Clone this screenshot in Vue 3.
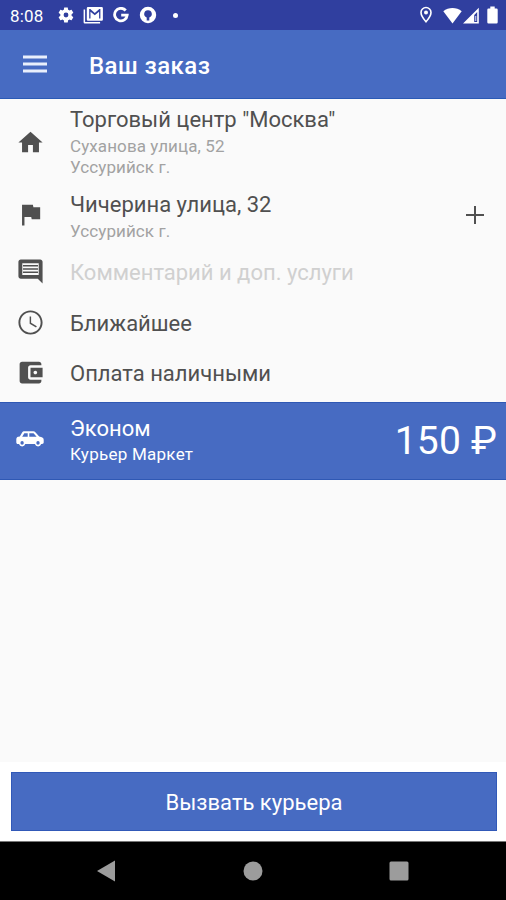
<script setup>
import { ref } from 'vue'

const time = ref('8:08')

const rows = [
    {
        id: 'from',
        title: 'Торговый центр "Москва"',
        lines: ['Суханова улица, 52', 'Уссурийск г.'],
        icon: 'M10 20v-6h4v6h5v-8h3L12 3 2 12h3v8z'
    },
    {
        id: 'to',
        title: 'Чичерина улица, 32',
        lines: ['Уссурийск г.'],
        icon: 'M14.4 6L14 4H5v17h2v-7h5.6l.4 2h7V6z',
        canAdd: true
    },
    {
        id: 'comment',
        title: 'Комментарий и доп. услуги',
        placeholder: true,
        icon: 'M21.99 4c0-1.1-.89-2-1.99-2H4c-1.1 0-2 .9-2 2v12c0 1.1.9 2 2 2h14l4 4-.01-18zM18.8 14.8H5.2V5.2h13.6zM5.8 6.6h12.4v1.2H5.8zM5.8 9.3h12.4v1.2H5.8zM5.8 12h12.4v1.2H5.8z'
    },
    {
        id: 'time',
        title: 'Ближайшее',
        icon: 'M11.99 2C6.47 2 2 6.48 2 12s4.47 10 9.99 10C17.52 22 22 17.52 22 12S17.52 2 11.99 2zM12 20.4c-4.64 0-8.4-3.76-8.4-8.4s3.76-8.4 8.4-8.4 8.4 3.76 8.4 8.4-3.76 8.4-8.4 8.4zM12.5 7H11.3v6l5.25 3.15.7-1.1-4.75-2.8z'
    },
    {
        id: 'payment',
        title: 'Оплата наличными',
        icon: 'M21 18v1c0 1.1-.9 2-2 2H5c-1.11 0-2-.9-2-2V5c0-1.1.89-2 2-2h14c1.1 0 2 .9 2 2v1h-9c-1.11 0-2 .9-2 2v8c0 1.1.89 2 2 2h9zm-9-2h10V8H12v8zm4-2.5c-.83 0-1.5-.67-1.5-1.5s.67-1.5 1.5-1.5 1.5.67 1.5 1.5-.67 1.5-1.5 1.5z'
    }
]

const tariff = {
    name: 'Эконом',
    service: 'Курьер Маркет',
    price: '150 ₽'
}
</script>

<template>
    <div class="screen">
        <div class="status-bar">
            <span class="clock">{{ time }}</span>
            <div class="notifications">
                <svg width="18" height="18" viewBox="0 0 24 24">
                    <path fill-rule="evenodd" d="M19.4 13c0-.3.1-.6.1-1s0-.7-.1-1l2.100-1.600c.2-.2.3-.4.1-.7l-2-3.400c-.1-.3-.4-.3-.6-.3l-2.500 1c-.5-.4-1.100-.7-1.700-1l-.4-2.600c0-.3-.2-.4-.4-.4h-4c-.3 0-.5.1-.5.4l-.4 2.600c-.6.3-1.200.6-1.700 1l-2.500-1c-.2-.1-.5 0-.6.3l-2 3.400c-.1.3 0 .5.1.7L4.500 11c0 .3-.1.7-.1 1s0 .7.1 1l-2.100 1.600c-.2.2-.3.5-.1.7l2 3.400c.1.3.4.3.6.3l2.500-1c.5.4 1.100.7 1.700 1l.4 2.600c0 .3.2.4.5.4h4c.2 0 .4-.1.4-.4l.4-2.600c.6-.3 1.200-.6 1.700-1l2.500 1c.2.1.5 0 .6-.3l2-3.400c.1-.2 0-.5-.1-.7zM12 15.200a3.200 3.200 0 1 1 0-6.400 3.200 3.200 0 0 1 0 6.400z" />
                </svg>
                <svg class="mail" width="20" height="18" viewBox="0 0 20 18">
                    <path fill-rule="evenodd" d="M5 1h13.700A1.200 1.200 0 0 1 19.900 2.200v11.300a1.200 1.200 0 0 1-1.200 1.200H5a1.200 1.200 0 0 1-1.200-1.200V2.200A1.200 1.200 0 0 1 5 1zM6.200 3v9.500h1.300V5.800l4.300 3.500 4.300-3.500v6.700h1.300V3h-1.100l-4.500 3.900L7.300 3z" />
                    <path d="M.6 3.500h1.500v12.500h15v1.500H1.800A1.200 1.200 0 0 1 .6 16.300z" />
                </svg>
                <svg class="google" width="16" height="16" viewBox="0 0 16 16">
                    <path class="stroke" d="M12.700 3.500A6.300 6.300 0 1 0 14.200 8.200H8.200" />
                </svg>
                <svg class="badge" width="18" height="18" viewBox="0 0 18 18">
                    <path fill-rule="evenodd" d="M9 .8a8.200 8.200 0 1 1 0 16.400A8.200 8.200 0 0 1 9 .8zM9 4.300a3.700 3.700 0 0 0-1.300 7.200v3h2.600v-3A3.700 3.700 0 0 0 9 4.300z" />
                </svg>
                <i class="dot"></i>
            </div>
            <div class="indicators">
                <svg class="pin" width="14" height="18" viewBox="0 0 14 18">
                    <path class="outline" d="M7 1.500a5 5 0 0 0-5 5c0 3.500 5 9.300 5 9.300s5-5.800 5-9.300a5 5 0 0 0-5-5z" />
                    <circle cx="7" cy="6.500" r="2" />
                </svg>
                <svg class="wifi" width="19" height="17" viewBox="0 0 19 17">
                    <path d="M9.500 16.500L.3 4.200C5.500-.2 13.500-.2 18.700 4.200z" />
                </svg>
                <svg class="signal" width="16" height="17" viewBox="0 0 16 17">
                    <path fill-rule="evenodd" d="M15.800.7v15.800H0zM14.200 5l-3 3v6.900h3z" />
                    <path d="M12.400 9h.8v5h-.8z" />
                </svg>
                <svg class="battery" width="11" height="18" viewBox="0 0 11 18">
                    <path d="M3.300.6h4.400v2H9.500q1.200 0 1.200 1.200v12.400q0 1.200-1.200 1.200h-8Q.3 17.400.3 16.200V3.800Q.3 2.600 1.500 2.600h1.800z" />
                </svg>
            </div>
        </div>

        <div class="app-bar">
            <svg class="menu" width="24" height="18" viewBox="0 0 24 18">
                <path d="M0 .5h24v3H0zM0 7.500h24v3H0zM0 14.500h24v3H0z" />
            </svg>
            <h1>Ваш заказ</h1>
        </div>

        <div class="order">
            <div v-for="row in rows" :key="row.id" :class="['row', `row-${row.id}`]">
                <svg class="row-icon" viewBox="0 0 24 24">
                    <path fill-rule="evenodd" :d="row.icon" />
                </svg>
                <div class="row-text">
                    <div :class="['title', { 'placeholder': row.placeholder }]">{{ row.title }}</div>
                    <div v-if="row.lines" class="lines">
                        <div v-for="line in row.lines" :key="line">{{ line }}</div>
                    </div>
                </div>
                <svg v-if="row.canAdd" class="add" width="18" height="18" viewBox="0 0 18 18">
                    <path d="M8 0h2v8h8v2h-8v8H8v-8H0V8h8z" />
                </svg>
            </div>
        </div>

        <div class="tariff">
            <svg class="car" width="28" height="17" viewBox="0 0 28 16" preserveAspectRatio="none">
                <path fill-rule="evenodd" d="M8.500.3h8.700c1 0 1.700.3 2.400 1l3.600 3.900 2.600.7c1.300.4 1.900 1.200 1.900 2.500v2.300c0 1-.6 1.500-1.700 1.500h-.8a3.300 3.300 0 0 1-6.300 0H9.300a3.300 3.300 0 0 1-6.300 0H2C.9 12.200.3 11.600.3 10.500V8c0-1.300.6-2.200 1.900-2.500l1.600-.3L6 1.600C6.600.7 7.300.3 8.500.3zM8.300 2L6.200 5.300h5.500V2zM13.300 2v3.300h7.300L18 2.500c-.3-.4-.6-.5-1.200-.5zM6.100 9.500a1.700 1.700 0 1 0 0 3.400 1.700 1.700 0 0 0 0-3.400zM22 9.500a1.700 1.700 0 1 0 0 3.400 1.700 1.700 0 0 0 0-3.400z" />
            </svg>
            <div class="tariff-text">
                <div class="tariff-name">{{ tariff.name }}</div>
                <div class="tariff-service">{{ tariff.service }}</div>
            </div>
            <div class="price">{{ tariff.price }}</div>
        </div>

        <div class="footer">
            <button class="call-button">Вызвать курьера</button>
        </div>

        <div class="nav-bar">
            <svg width="20" height="22" viewBox="0 0 20 22">
                <path d="M19 .5v21L1 11z" />
            </svg>
            <svg width="20" height="20" viewBox="0 0 20 20">
                <circle cx="10" cy="10" r="9.500" />
            </svg>
            <svg width="20" height="20" viewBox="0 0 20 20">
                <rect x=".5" y=".5" width="19" height="19" rx="1.500" />
            </svg>
        </div>
    </div>
</template>

<style>
body {
    margin: 0;
}
</style>

<style scoped>
.screen {
    display: flex;
    flex-direction: column;
    width: 506px;
    height: 900px;
    overflow: hidden;
    background: #fafafa;
    font-family: Roboto, sans-serif;
}

svg {
    display: block;
    flex: none;
    fill: currentColor;
}

.status-bar {
    display: flex;
    align-items: center;
    box-sizing: border-box;
    height: 30px;
    padding: 0 8px 0 10px;
    background: #303f9f;
    color: #fff;
}

.clock {
    width: 47px;
    font-size: 17px;
    line-height: 20px;
    letter-spacing: 0.2px;
    padding-top: 2px;
}

.notifications,
.indicators {
    display: flex;
    align-items: center;
}

.mail {
    margin-left: 8px;
}

.google {
    margin-left: 10px;

    & .stroke {
        fill: none;
        stroke: currentColor;
        stroke-width: 2.8;
    }
}

.badge {
    margin-left: 10px;
}

.dot {
    width: 5px;
    height: 5px;
    margin-left: 16px;
    border-radius: 50%;
    background: #fff;
}

.indicators {
    margin-left: auto;
}

.pin .outline {
    fill: none;
    stroke: currentColor;
    stroke-width: 1.6;
}

.wifi {
    margin-left: 10px;
}

.signal {
    margin-left: 1px;
}

.battery {
    margin-left: 8px;
}

.app-bar {
    display: flex;
    align-items: center;
    box-sizing: border-box;
    height: 69px;
    padding-left: 23px;
    border-bottom: 1px solid #2a5ab6;
    background: #476bc2;
    color: #fff;

    & .menu {
        color: #e9effc;
    }

    & h1 {
        margin: 4px 0 0 42px;
        font-size: 24px;
        line-height: 28px;
        font-weight: 500;
        letter-spacing: 0.45px;
    }
}

.order {
    height: 303px;
    color: #505050;
}

.row {
    display: flex;
    align-items: center;
    box-sizing: border-box;
    height: 50px;
    padding: 0 22px 0 16px;
}

.row-icon {
    width: 29px;
    height: 29px;
    margin-right: 25px;
}

.row-text {
    flex: 1;
}

.title {
    font-size: 22px;
    line-height: 26px;
    white-space: nowrap;

    &.placeholder {
        color: #d0d0d0;
    }
}

.lines {
    margin-top: 3px;
    font-size: 17px;
    line-height: 20px;
    letter-spacing: 0.1px;
    color: #a2a2a2;
}

.row-from {
    height: 86px;

    & .lines {
        line-height: 20.5px;
    }
}

.row-to {
    height: 59px;

    & .row-text {
        padding-top: 3px;
    }
}

.row-comment {
    height: 54px;

    & .row-text {
        padding-top: 3px;
    }
}

.row-time,
.row-payment {
    & .row-icon {
        margin-bottom: 2px;
    }

    & .row-text {
        padding-top: 1px;
    }
}

.tariff {
    display: flex;
    align-items: center;
    box-sizing: border-box;
    height: 78px;
    padding: 0 9px 0 16px;
    border: solid #2f58b4;
    border-width: 1px 0;
    background: #476bc2;
    color: #fff;
}

.car {
    margin: 0 26px 3px 0;
}

.tariff-text {
    flex: 1;
    padding-bottom: 3px;
}

.tariff-name {
    font-size: 22px;
    line-height: 26px;
}

.tariff-service {
    margin-top: 2px;
    font-size: 17px;
    line-height: 20px;
    letter-spacing: 0.25px;
}

.price {
    font-size: 39px;
    line-height: 46px;
    letter-spacing: 0.2px;
}

.footer {
    box-sizing: border-box;
    height: 80px;
    margin-top: auto;
    padding: 10px 9px 10px 11px;
    border-bottom: 1px solid #777;
    background: #fff;
}

.call-button {
    display: block;
    width: 100%;
    height: 59px;
    padding: 3px 0 0;
    border: 1px solid #3159b8;
    background: #476bc2;
    color: #fff;
    font: 22px/26px Roboto, sans-serif;
}

.nav-bar {
    display: flex;
    align-items: center;
    justify-content: space-between;
    box-sizing: border-box;
    height: 58px;
    padding: 0 97px 0 96px;
    background: #000;
    color: #9c9c9c;
}
</style>
